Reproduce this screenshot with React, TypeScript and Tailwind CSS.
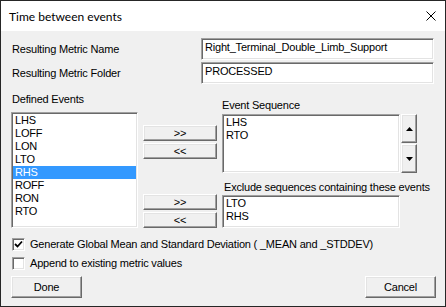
import React from 'react';

const defined = ['LHS', 'LOFF', 'LON', 'LTO', 'RHS', 'ROFF', 'RON', 'RTO'];
const sequence = ['LHS', 'RTO'];
const excluded = ['LTO', 'RHS'];

const sunken =
  'bg-white border border-t-[#a0a0a0] border-l-[#a0a0a0] border-r-white border-b-white shadow-[inset_1px_1px_0_#696969,inset_-1px_-1px_0_#e3e3e3]';
const raised =
  'bg-[#f0f0f0] border border-t-white border-l-white border-r-[#696969] border-b-[#696969] shadow-[inset_-1px_-1px_0_#a0a0a0,inset_1px_1px_0_#e3e3e3] flex items-center justify-center';

const Checkbox = ({ checked }: { checked?: boolean }) => (
  <div className={`w-[13px] h-[13px] ${sunken} flex items-center justify-center`}>
    {checked && (
      <svg width="9" height="9" viewBox="0 0 9 9">
        <path d="M1 4 L3.5 6.5 L8 1.5" fill="none" stroke="#000" strokeWidth="1.8" />
      </svg>
    )}
  </div>
);

const ListBox = ({ items, selected, className }: { items: string[]; selected?: string; className: string }) => (
  <div className={`${sunken} ${className} py-[1px] px-[1px] overflow-hidden`}>
    {items.map((it) => (
      <div
        key={it}
        className={`h-[13px] pl-[2px] ${it === selected ? 'bg-[#3399ff] text-white' : ''}`}
      >
        {it}
      </div>
    ))}
  </div>
);

export default function App() {
  return (
    <div className="w-[446px] h-[307px] border border-[#262626] bg-[#f0f0f0] flex flex-col font-['Liberation_Sans',Arial,sans-serif] text-[11px] leading-[13px] tracking-[-0.2px] text-black">
      {/* title bar */}
      <div className="h-[30px] bg-white flex items-center justify-between pl-[8px] pr-[9px] font-['Lato',sans-serif] text-[12px] tracking-normal">
        <span>Time between events</span>
        <svg width="10" height="10" viewBox="0 0 10 10">
          <path d="M0.5 0.5 L9.5 9.5 M9.5 0.5 L0.5 9.5" stroke="#000" strokeWidth="1" />
        </svg>
      </div>

      <div className="flex flex-col px-[10px]">
        <div className="flex items-center mt-[7px]">
          <div className="w-[190px] pl-[1px]">Resulting Metric Name</div>
          <div className={`w-[233px] h-[22px] ${sunken} pt-[2px] pl-[3px]`}>Right_Terminal_Double_Limb_Support</div>
        </div>
        <div className="flex items-center mt-[2px]">
          <div className="w-[190px] pl-[1px]">Resulting Metric Folder</div>
          <div className={`w-[233px] h-[22px] ${sunken} pt-[2px] pl-[3px]`}>PROCESSED</div>
        </div>

        <div className="flex mt-[9px]">
          <div className="w-[127px] flex flex-col">
            <div className="h-[13px] pl-[1px]">Defined Events</div>
            <ListBox items={defined} selected="RHS" className="mt-[6px] h-[116px]" />
          </div>

          <div className="w-[74px] ml-[5px] flex flex-col pt-[32px]">
            <div className={`h-[16px] ${raised}`}>&gt;&gt;</div>
            <div className={`h-[16px] mt-[2px] ${raised}`}>&lt;&lt;</div>
            <div className={`h-[16px] mt-[35px] ${raised}`}>&gt;&gt;</div>
            <div className={`h-[16px] mt-[2px] ${raised}`}>&lt;&lt;</div>
          </div>

          <div className="ml-[5px] flex flex-col pt-[6px]">
            <div className="h-[13px]">Event Sequence</div>
            <div className="flex mt-[2px]">
              <ListBox items={sequence} className="w-[178px] h-[59px]" />
              <div className="ml-[1px] flex flex-col gap-[1px]">
                <div className={`w-[16px] h-[29px] ${raised}`}>
                  <svg width="7" height="4" viewBox="0 0 7 4">
                    <polygon points="3.5,0 7,4 0,4" fill="#000" />
                  </svg>
                </div>
                <div className={`w-[16px] h-[29px] ${raised}`}>
                  <svg width="7" height="4" viewBox="0 0 7 4">
                    <polygon points="0,0 7,0 3.5,4" fill="#000" />
                  </svg>
                </div>
              </div>
            </div>
            <div className="h-[13px] mt-[8px] pl-[2px] whitespace-nowrap">Exclude sequences containing these events</div>
            <ListBox items={excluded} className="w-[178px] h-[33px] mt-[1px]" />
          </div>
        </div>

        <div className="flex items-center mt-[10px] ml-[1px] gap-[5px]">
          <Checkbox checked />
          <span>Generate Global Mean and Standard Deviation ( _MEAN and _STDDEV)</span>
        </div>
        <div className="flex items-center mt-[6px] ml-[1px] gap-[5px]">
          <Checkbox />
          <span>Append to existing metric values</span>
        </div>

        <div className="flex justify-between w-[425px] mt-[6px]">
          <div className={`w-[71px] h-[22px] ${raised}`}>Done</div>
          <div className={`w-[71px] h-[22px] ${raised}`}>Cancel</div>
        </div>
      </div>
    </div>
  );
}
